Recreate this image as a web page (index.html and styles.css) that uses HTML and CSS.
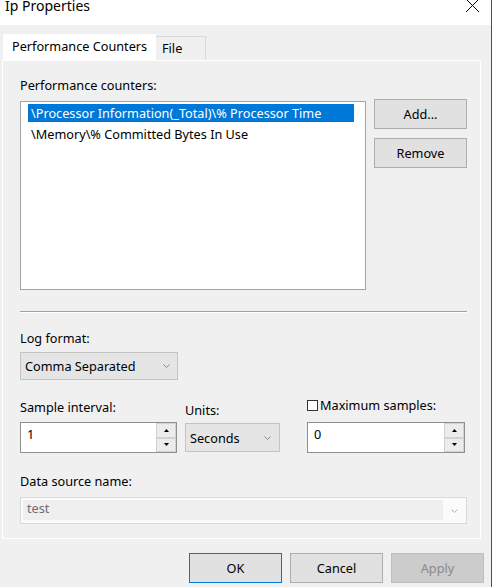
FILE: index.html
```html
<!DOCTYPE html>
<html>
<head>
<meta charset="utf-8">
<title>Ip Properties</title>
<link rel="stylesheet" href="styles.css">
</head>
<body>
<div class="window">
  <div class="titlebar">
    <span class="title">Ip Properties</span>
    <svg class="close" width="13" height="13" viewBox="0 0 13 13"><path d="M0 0 L13 13 M13 0 L0 13" stroke="#000" stroke-width="1" fill="none"/></svg>
  </div>
  <div class="tabs">
    <div class="tab active">Performance Counters</div>
    <div class="tab inactive">File</div>
  </div>
  <div class="panel">
    <div class="label lbl-counters">Performance counters:</div>
    <div class="counters-row">
      <div class="listbox">
        <div class="item selected">\Processor Information(_Total)\% Processor Time</div>
        <div class="item">\Memory\% Committed Bytes In Use</div>
      </div>
      <div class="side-buttons">
        <div class="btn">Add...</div>
        <div class="btn">Remove</div>
      </div>
    </div>
    <div class="separator"></div>
    <div class="label lbl-log">Log format:</div>
    <div class="combo combo-log">
      <span>Comma Separated</span>
      <svg class="chev" width="7" height="4" viewBox="0 0 7 4"><polyline points="0.5,0.5 3.5,3.5 6.5,0.5" stroke="#8a8a8a" stroke-width="1" fill="none"/></svg>
    </div>
    <div class="fields-row">
      <div class="col col-interval">
        <div class="label">Sample interval:</div>
        <div class="spinbox">
          <div class="spin-text">1</div>
          <div class="spin">
            <div class="spin-btn"><svg width="5" height="3" viewBox="0 0 5 3"><polygon points="0,3 2.5,0 5,3" fill="#000"/></svg></div>
            <div class="spin-btn"><svg width="5" height="3" viewBox="0 0 5 3"><polygon points="0,0 5,0 2.5,3" fill="#000"/></svg></div>
          </div>
        </div>
      </div>
      <div class="col col-units">
        <div class="label">Units:</div>
        <div class="combo combo-units">
          <span>Seconds</span>
          <svg class="chev" width="7" height="4" viewBox="0 0 7 4"><polyline points="0.5,0.5 3.5,3.5 6.5,0.5" stroke="#8a8a8a" stroke-width="1" fill="none"/></svg>
        </div>
      </div>
      <div class="col col-max">
        <div class="label check-label"><span class="checkbox"></span><span>Maximum samples:</span></div>
        <div class="spinbox">
          <div class="spin-text">0</div>
          <div class="spin">
            <div class="spin-btn"><svg width="5" height="3" viewBox="0 0 5 3"><polygon points="0,3 2.5,0 5,3" fill="#000"/></svg></div>
            <div class="spin-btn"><svg width="5" height="3" viewBox="0 0 5 3"><polygon points="0,0 5,0 2.5,3" fill="#000"/></svg></div>
          </div>
        </div>
      </div>
    </div>
    <div class="label lbl-source">Data source name:</div>
    <div class="combo-disabled">
      <div class="field">test</div>
      <div class="chev-area"><svg width="7" height="4" viewBox="0 0 7 4"><polyline points="0.5,0.5 3.5,3.5 6.5,0.5" stroke="#b0b0b0" stroke-width="1" fill="none"/></svg></div>
    </div>
  </div>
  <div class="footer">
    <div class="btn btn-default">OK</div>
    <div class="btn">Cancel</div>
    <div class="btn btn-disabled">Apply</div>
  </div>
</div>
</body>
</html>
```
FILE: styles.css
```css
* { box-sizing: border-box; }
html, body { margin: 0; padding: 0; }
body {
  font-family: "Noto Sans", "Open Sans", sans-serif;
  font-size: 12.7px;
  color: #000;
  background: #f0f0f0;
}
.window {
  width: 492px;
  height: 587px;
  background: #f0f0f0;
  border-right: 1px solid #4d4d4d;
  overflow: hidden;
}
.titlebar {
  height: 25px;
  background: #fff;
  display: flex;
  justify-content: space-between;
  align-items: flex-start;
  padding-left: 5px;
  padding-right: 12px;
}
.title {
  display: block;
  font-size: 14px;
  line-height: 12px;
  height: 12px;
}
.close { margin-top: -1px; display: block; }
.tabs {
  height: 35px;
  display: flex;
  align-items: flex-end;
  padding-left: 3px;
}
.tab { line-height: 18px; }
.tab.active {
  width: 153px;
  height: 26px;
  background: #fff;
  padding: 3px 0 0 9px;
}
.tab.inactive {
  width: 50px;
  height: 24px;
  border: 1px solid #d9d9d9;
  border-left: none;
  border-bottom: none;
  padding: 2px 0 0 6px;
}
.panel {
  margin-left: 2px;
  width: 479px;
  height: 479px;
  border: 1px solid #fff;
  padding: 0 13px 0 17px;
}
.label { line-height: 18px; height: 18px; white-space: nowrap; }
.lbl-counters { margin-top: 15px; }
.counters-row {
  margin-top: 5px;
  display: flex;
  gap: 8px;
  align-items: flex-start;
}
.listbox {
  width: 346px;
  height: 189px;
  margin-top: 2px;
  border: 1px solid #a3a3a3;
  background: #fff;
  padding-top: 2px;
}
.item {
  height: 18px;
  line-height: 18px;
  margin: 0 11px 3px 7px;
  padding-left: 3px;
  white-space: nowrap;
}
.item.selected { background: #0078d7; color: #fff; }
.side-buttons {
  width: 93px;
  display: flex;
  flex-direction: column;
  gap: 9px;
}
.btn {
  height: 30px;
  border: 1px solid #adadad;
  background: #e1e1e1;
  display: flex;
  align-items: center;
  justify-content: center;
  line-height: 18px;
}
.separator {
  margin-top: 21px;
  height: 2px;
  border-top: 1px solid #a0a0a0;
  border-bottom: 1px solid #fff;
}
.lbl-log { margin-top: 16px; }
.combo {
  border: 1px solid #c4c4c4;
  background: #e5e5e5;
  display: flex;
  align-items: center;
  justify-content: space-between;
  line-height: 18px;
  padding-left: 4px;
}
.combo-log {
  margin-top: 5px;
  width: 158px;
  height: 28px;
  padding-right: 7px;
}
.chev { display: block; }
.fields-row {
  display: flex;
  gap: 8px;
}
.col-interval { width: 157px; }
.col-interval .label { margin-top: 18px; }
.col-interval .spinbox { margin-top: 6px; }
.col-units { width: 95px; margin-right: 19px; }
.col-units .label { margin-top: 21px; }
.combo-units {
  margin-top: 4px;
  height: 29px;
  padding-right: 8px;
}
.col-max { width: 158px; }
.col-max .label { margin-top: 16px; }
.col-max .spinbox { margin-top: 8px; }
.check-label { display: flex; align-items: center; gap: 2px; }
.checkbox {
  width: 11px;
  height: 11px;
  border: 1px solid #333;
  background: #fff;
  display: block;
}
.spinbox {
  height: 31px;
  border: 1px solid #8f8f8f;
  background: #fff;
  display: flex;
}
.spin-text {
  flex: 1;
  line-height: 18px;
  padding: 2px 0 0 6px;
}
.spin {
  width: 20px;
  display: flex;
  flex-direction: column;
}
.spin-btn {
  flex: 1;
  background: #ececec;
  border: 1px solid #d2d2d2;
  display: flex;
  align-items: center;
  justify-content: center;
}
.spin-btn svg { display: block; }
.lbl-source { margin-top: 19px; }
.combo-disabled {
  margin-top: 7px;
  height: 27px;
  border: 1px solid #d9d9d9;
  background: #fbfbfb;
  padding: 2px 1px 2px 2px;
  display: flex;
}
.field {
  flex: 1;
  height: 20px;
  background: #efefef;
  color: #6d6d6d;
  line-height: 17px;
  padding-left: 4px;
}
.chev-area {
  width: 22px;
  display: flex;
  align-items: center;
  justify-content: center;
}
.chev-area svg { display: block; }
.footer {
  margin-top: 14px;
  display: flex;
  gap: 8px;
  padding-left: 189px;
}
.footer .btn { width: 93px; }
.btn-default { border-color: #0078d7; }
.btn-disabled { background: #cccccc; border-color: #bfbfbf; color: #8a8a8a; }
```
